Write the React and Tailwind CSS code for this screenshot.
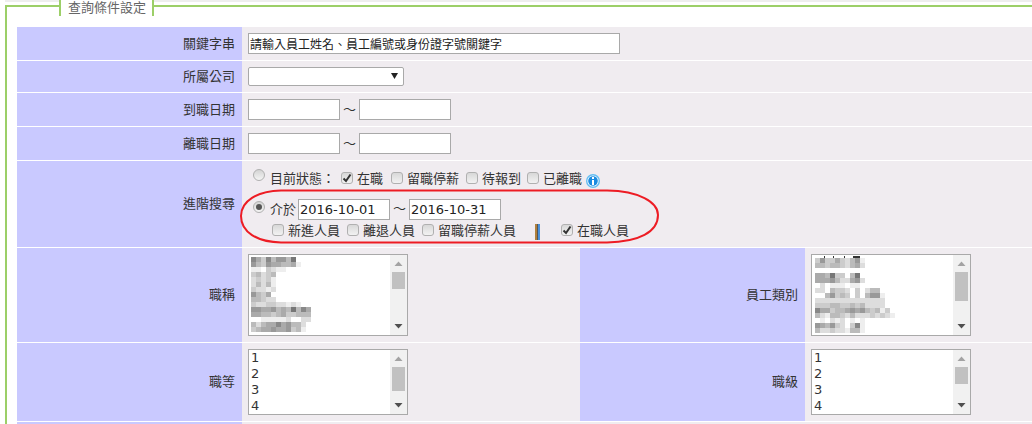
const FONT = "font-['DejaVu_Sans','Noto_Sans_CJK_TC',sans-serif]";

// gray level per 5px block, f = white
const BLUR_A = [
  '8ac8b99b7', '9bc9aabbae', 'eefcdeefff', 'cbdcb', 'dcdce', 'dbdbe', 'cdded', '9bca', 'bbcdd',
  'cddccddedef', '99aa9bab7b8a', 'aabbcbaccbbb', 'ffeeeeedffdd', 'bdbaa8a9bbd', 'cbaa9aa9cbe',
];
const BLUR_B = [
  'c9ccacdb9e', 'bbcbbcdbad', 'ffffffffff', 'aab7ccfb7f', 'aaa9bdda9d', 'fdfeeefeef',
  'ddfbccdfcfdbbf', 'ffb9cbcfcfb99e', 'ddddddddddddddf', 'cccbbccbcbddddf', '8aacbba9a9bcbec',
  'bdebbcdbdddcdcde', 'fefdedfefe', '9ab9cdfc8e', 'bddcddebbe',
];

const Blur = ({ rows, ticks = [] }) => (
  <svg width="90" height="76" className="block overflow-visible">
    {ticks.map(([x, w]) => (
      <rect key={x} x={x} y="-2" width={w} height="2" fill="#333" />
    ))}
    {rows.map((row, y) =>
      row.split('').map((c, x) =>
        c === 'f' ? null : (
          <rect
            key={`${x}-${y}`}
            x={x * 5}
            y={y * 5}
            width="5"
            height="5"
            fill={`#${c}${c}${c}${c}${c}${c}`}
          />
        )
      )
    )}
  </svg>
);

const Check = ({ checked = false }) => (
  <span className="mb-[3px] flex h-[12px] w-[12px] shrink-0 items-center justify-center rounded-[3px] border border-[#b0b0b0] bg-gradient-to-b from-[#d8d8d8] to-[#f2f2f2]">
    {checked && (
      <svg width="10" height="10" viewBox="0 0 10 10">
        <path d="M1.5 5.5 L4 8 L8.5 1.5" fill="none" stroke="#333" strokeWidth="2" />
      </svg>
    )}
  </span>
);

const Radio = ({ checked = false }) => (
  <span className="flex h-[12px] w-[12px] shrink-0 items-center justify-center rounded-full border border-[#b0b0b0] bg-gradient-to-b from-[#d4d4d4] to-[#f4f4f4]">
    {checked && <span className="h-[6px] w-[6px] rounded-full bg-[#555]" />}
  </span>
);

const DateInput = ({ value = '' }) => (
  <input
    readOnly
    value={value}
    className="h-[21px] w-[92px] border border-[#a9a9a9] bg-white px-px text-[13px] text-[#222] outline-none"
  />
);

const DateRange = ({ from, to }) => (
  <div className="flex items-center">
    <DateInput value={from} />
    <span className="w-[19px] text-center text-[13px] text-[#333]">～</span>
    <DateInput value={to} />
  </div>
);

const ListBox = ({ height, thumbHeight, children }) => (
  <div className="flex w-[160px] overflow-hidden border border-[#a9a9a9] bg-white" style={{ height }}>
    <div className="min-w-0 flex-1 overflow-hidden pl-[2px] pt-[2px]">{children}</div>
    <div className="flex w-[17px] shrink-0 flex-col items-center bg-[#f1f1f1]">
      <svg width="9" height="5" viewBox="0 0 9 5" className="mt-[6px] shrink-0">
        <path d="M0.5 5 L4.5 0.5 L8.5 5 Z" fill="#a3a3a3" />
      </svg>
      <div className="mt-[6px] w-[13px] bg-[#c1c1c1]" style={{ height: thumbHeight }} />
      <svg width="9" height="5" viewBox="0 0 9 5" className="mb-[6px] mt-auto shrink-0">
        <path d="M0.5 0 L4.5 4.5 L8.5 0 Z" fill="#505050" />
      </svg>
    </div>
  </div>
);

const Digits = () => (
  <div className="-mt-[2px] text-[13px] leading-[16px] text-[#333]">
    <div>1</div>
    <div>2</div>
    <div>3</div>
    <div>4</div>
  </div>
);

const Label = ({ children }) => (
  <div className="flex w-[225px] shrink-0 items-center justify-end bg-[#c9c9ff] pr-[7px] text-[#333]">
    {children}
  </div>
);

const Row = ({ height, label, children }) => (
  <div className="flex" style={{ height }}>
    <Label>{label}</Label>
    <div className="relative min-w-0 flex-1 bg-[#f0ecf0] pl-[6px]">{children}</div>
  </div>
);

const Opt = ({ className = '', checked, children }) => (
  <label className={`flex items-center ${className}`}>
    <Check checked={checked} />
    <span className="ml-[4px] whitespace-nowrap">{children}</span>
  </label>
);

const ListRow = ({ height, labelA, labelB, listHeight, thumbA, thumbB, childA, childB }) => (
  <div className="flex" style={{ height }}>
    <Label>{labelA}</Label>
    <div className="w-[338px] shrink-0 bg-[#f0ecf0] pl-[6px] pt-[6px]">
      <ListBox height={listHeight} thumbHeight={thumbA}>{childA}</ListBox>
    </div>
    <Label>{labelB}</Label>
    <div className="min-w-0 flex-1 bg-[#f0ecf0] pl-[6px] pt-[6px]">
      <ListBox height={listHeight} thumbHeight={thumbB}>{childB}</ListBox>
    </div>
  </div>
);

export default function App() {
  return (
    <div className={`h-[424px] w-[1032px] overflow-hidden bg-white text-[13px] text-[#333] ${FONT}`}>
      <div className="ml-[5px] h-[2px] bg-[#eeeeee]" />
      <div className="relative ml-[5px] mt-[3px] border-l-2 border-t-2 border-[#9ccf68] pl-[10px] pt-[20px]">
        {/* legend sits over the border line */}
        <div className="absolute left-[52px] top-[-7px] h-[16px] w-[95px] border-x-2 border-[#9ccf68] bg-white pl-[7px] text-[13px] leading-[15px] text-[#666]">
          查詢條件設定
        </div>

        <div className="flex flex-col gap-px">
          <Row height={33} label="關鍵字串">
            <input
              readOnly
              value="請輸入員工姓名、員工編號或身份證字號關鍵字"
              className="mt-[6px] h-[21px] w-[372px] border border-[#a9a9a9] bg-white px-px text-[12px] text-[#222] outline-none"
            />
          </Row>
          <Row height={31} label="所屬公司">
            <div className="relative mt-[6px] w-[156px]">
              <select className="block h-[19px] w-full appearance-none rounded-[2px] border border-[#a9a9a9] bg-white text-[12px]">
                <option></option>
              </select>
              <svg width="7" height="6" viewBox="0 0 7 6" className="absolute left-[143px] top-[6px]">
                <path d="M0 0 H7 L3.5 6 Z" fill="#222" />
              </svg>
            </div>
          </Row>
          <Row height={33} label="到職日期">
            <div className="pt-[6px]"><DateRange /></div>
          </Row>
          <Row height={33} label="離職日期">
            <div className="pt-[6px]"><DateRange /></div>
          </Row>
          <Row height={86} label="進階搜尋">
            <div className="flex h-[35px] items-start pl-[5px] pt-[9px] leading-[18px]">
              <span className="-mt-px"><Radio /></span>
              <span className="ml-[5px] w-[71px]">目前狀態：</span>
              <Opt className="w-[50px]" checked>在職</Opt>
              <Opt className="w-[75px]">留職停薪</Opt>
              <Opt className="w-[61px]">待報到</Opt>
              <Opt>已離職</Opt>
              <svg width="14" height="14" viewBox="0 0 14 14" className="ml-[4px] mt-[4px] shrink-0">
                <circle cx="7" cy="7" r="7" fill="#62bdf2" />
                <circle cx="7" cy="7" r="5.6" fill="#fff" />
                <circle cx="7" cy="7" r="4.8" fill="#1a8be0" />
                <rect x="6" y="6" width="2" height="5" fill="#fff" />
                <rect x="6" y="3" width="2" height="2" fill="#fff" />
              </svg>
            </div>
            <div className="flex h-[24px] items-center pl-[5px] pt-[2px] leading-[18px]">
              <span className="mb-[5px]"><Radio checked /></span>
              <span className="ml-[5px] mt-px w-[28px]">介於</span>
              <DateRange from="2016-10-01" to="2016-10-31" />
            </div>
            <div className="flex items-center pl-[24px] pt-[2px] leading-[18px]">
              <Opt className="w-[75px]">新進人員</Opt>
              <Opt className="w-[75px]">離退人員</Opt>
              <Opt className="w-[113px]">留職停薪人員</Opt>
              <span className="mt-[2px] flex h-[16px] w-[26px]">
                <span className="w-[2px] bg-[#b0803c]" />
                <span className="w-px bg-[#555]" />
                <span className="w-[2px] bg-[#4a90d9]" />
              </span>
              <Opt checked>在職人員</Opt>
            </div>
            {/* hand-drawn red mark over the date range */}
            <svg width="424" height="58" className="absolute left-[-5px] top-[28px]">
              <path
                d="M44 1.5 L370 1.5 C402 2 421 13 421 26 C421 43 402 53 370 53.5 L44 53.5 C20 53 4 43 4 27 C4 12 20 2 44 1.5 Z"
                fill="none"
                stroke="#ed1c24"
                strokeWidth="2"
              />
            </svg>
          </Row>
          <ListRow
            height={94}
            labelA="職稱"
            labelB="員工類別"
            listHeight={82}
            thumbA={17}
            thumbB={29}
            childA={<Blur rows={BLUR_A} />}
            childB={
              <div className="pl-px pt-px">
                <Blur rows={BLUR_B} ticks={[[9, 1], [18, 1], [29, 1], [38, 7]]} />
              </div>
            }
          />
          <ListRow
            height={78}
            labelA="職等"
            labelB="職級"
            listHeight={66}
            thumbA={24}
            thumbB={17}
            childA={<Digits />}
            childB={<Digits />}
          />
          <div className="flex h-[10px]">
            <div className="w-[225px] bg-[#c9c9ff]" />
            <div className="flex-1 bg-[#f0ecf0]" />
          </div>
        </div>
      </div>
    </div>
  );
}
